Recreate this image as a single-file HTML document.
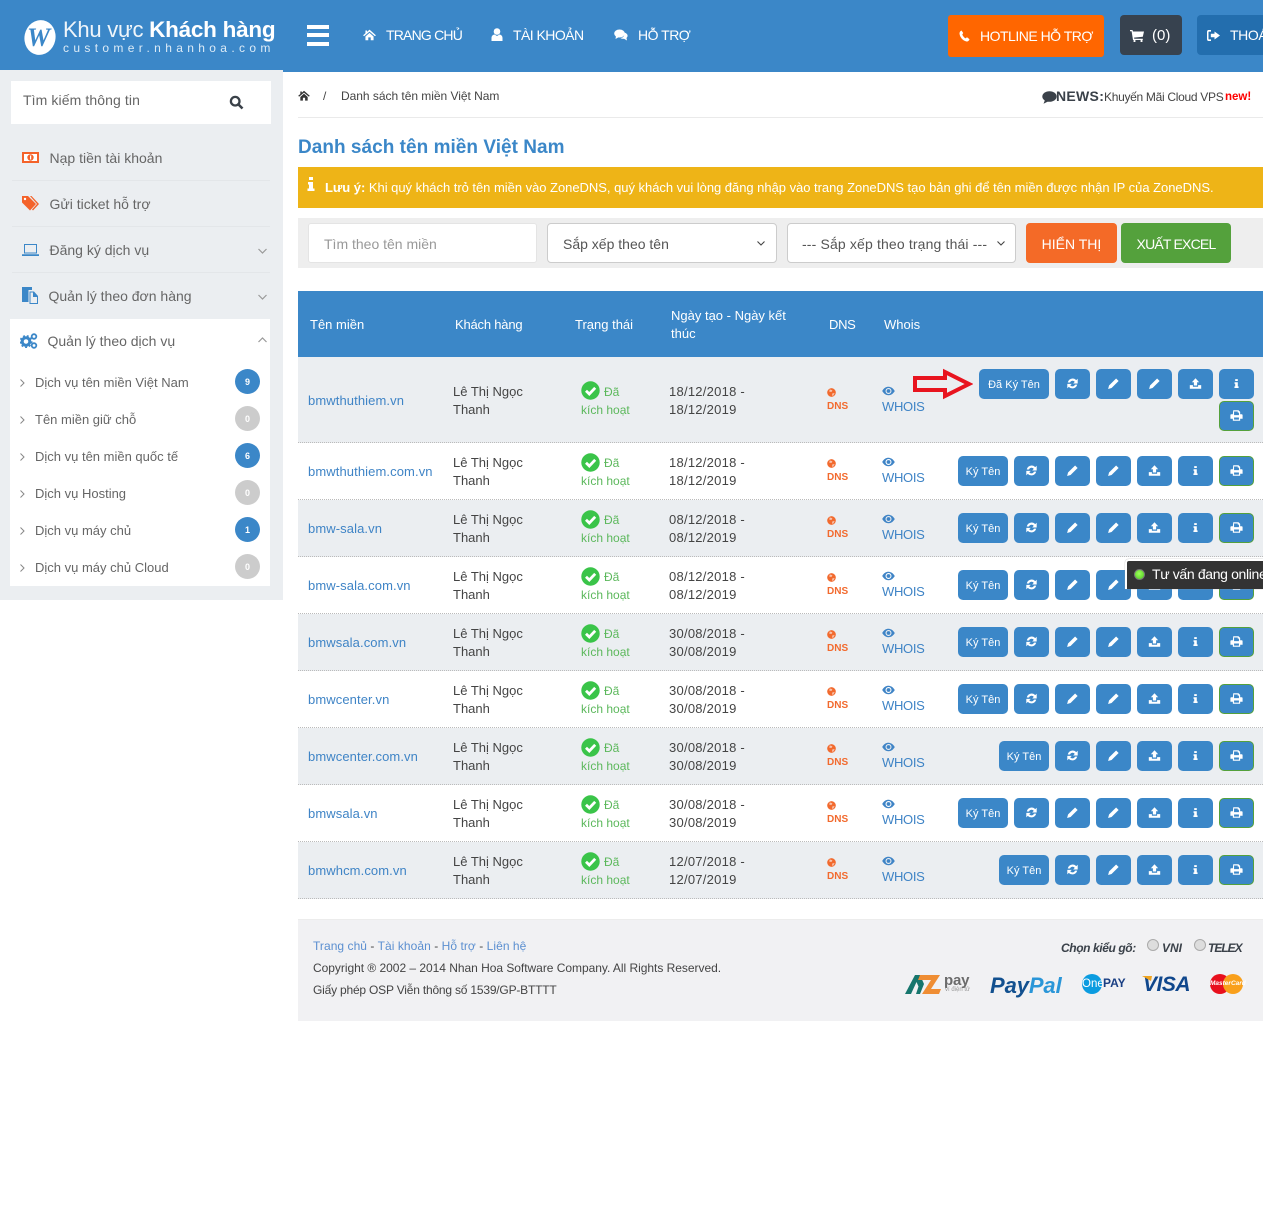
<!DOCTYPE html>
<html lang="vi"><head><meta charset="utf-8"><title>Danh sách tên miền Việt Nam</title>
<style>
*{box-sizing:border-box}
html,body{margin:0;padding:0;background:#fff}
body{width:1263px;height:1210px;position:relative;overflow:hidden;font-family:"Liberation Sans",sans-serif;font-size:13px;color:#444}
.a{position:absolute;white-space:nowrap}
svg{display:block}
.hd{position:absolute;left:0;top:0;width:1263px;height:72px;background:#3b87c8}
.nav{position:absolute;top:26px;color:#fff;font-size:14px;line-height:18px;white-space:nowrap}
.side{position:absolute;left:0;top:70px;width:283px;height:530px;background:#ebeef1}
.si{position:absolute;color:#666;font-size:14px;line-height:20px;white-space:nowrap}
.sep{position:absolute;left:12px;width:258px;height:1px;background:#e3e6e9}
.sub{position:absolute;left:35px;color:#666;font-size:13px;line-height:20px;white-space:nowrap}
.bdg{position:absolute;left:235px;width:25px;height:25px;border-radius:50%;color:#fff;font-size:9px;font-weight:bold;text-align:center;line-height:26px}
.bl{background:#3b87c8}.gr{background:#ccc}
.th{position:absolute;color:#fff;font-size:13px;line-height:18px;white-space:nowrap}
.r{position:absolute;left:298px;width:965px;height:57px;border-bottom:1px dotted #bbb}
.g{background:#ebeef1}
.in{position:absolute;left:0;top:0;width:965px;height:57px}
.d{position:absolute;left:10px;top:20px;color:#3f84c6;font-size:13px;line-height:18px;white-space:nowrap;letter-spacing:.1px}
.n{position:absolute;left:155px;top:11px;line-height:18px;white-space:nowrap;color:#444}
.ok{position:absolute;left:283px;top:10px;width:19px;height:19px}
.s1{position:absolute;left:306px;top:11px;color:#5cb85c;line-height:18px;font-size:12px}
.s2{position:absolute;left:283px;top:29px;color:#5cb85c;line-height:18px;white-space:nowrap;font-size:12px}
.dt{position:absolute;left:371px;top:11px;line-height:18px;white-space:nowrap;color:#444;letter-spacing:.25px}
.gl{position:absolute;left:529px;top:16px;width:9px;height:9px}
.dn{position:absolute;left:529px;top:29px;color:#f26a2e;font-size:10px;font-weight:bold;line-height:12px}
.ey{position:absolute;left:584px;top:14px;width:13px;height:10px}
.wh{position:absolute;left:584px;top:26px;color:#3f84c6;line-height:18px;letter-spacing:-.3px}
.b{position:absolute;top:13px;width:35px;height:30px;background:#3b87c8;border-radius:5px;color:#fff}
.b svg{position:absolute;left:11px;top:8px;width:13px;height:13px;fill:#fff}
.p{border:1px solid #54a13c}.p svg{left:10px;top:7px}
.t{position:absolute;top:13px;height:30px;background:#3b87c8;border-radius:5px;color:#fff;font-size:11px;text-align:center;line-height:33px;white-space:nowrap}
.x1{left:921px}.x2{left:880px}.x3{left:839px}.x4{left:798px}.x5{left:757px}.x6{left:716px}
.ky{left:660px;width:50px}.ky2{left:701px;width:50px}
.f{position:absolute;left:313px;font-size:12px;line-height:18px;white-space:nowrap;color:#444}
.f b{font-weight:normal;color:#5b8fd0}
</style></head>
<body>
<svg width="0" height="0" style="position:absolute">
<symbol id="ref" viewBox="0 0 16 16"><path d="M8 1.800a6.200 6.200 0 0 1 4.600 2.100L14.400 2.200V8H8.800L10.800 6A3.400 3.400 0 0 0 4.900 6.800H2.200A6.200 6.200 0 0 1 8 1.800zM1.600 8.400H7.200L5.200 10.200A3.400 3.400 0 0 0 11.100 9.400H13.800A6.200 6.200 0 0 1 3.400 12.200L1.600 14z"/></symbol>
<symbol id="pen" viewBox="0 0 16 16"><path d="M11.200 1.800L14.300 4.900 5.600 13.600 1.400 14.700 2.500 10.500z"/></symbol>
<symbol id="up" viewBox="0 0 16 16"><path d="M8 1.500L12.500 6.500H10V10.500H6V6.500H3.500zM1 10H4.800V12H11.200V10H15V14.500H1z"/></symbol>
<symbol id="inf" viewBox="-2 -2 20 20"><path d="M6 1.200H10V4.200H6zM5 6H10V12.500H11.200V15H4.800V12.500H6V8.500H5z"/></symbol>
<symbol id="pr" viewBox="0 0 16 16"><path fill-rule="evenodd" d="M4 1.500H10.500L12.500 3.500V6.500H14.500A1 1 0 0 1 15.500 7.500V12H12.500V14.500H3.500V12H.5V7.500A1 1 0 0 1 1.500 6.500H3.500zM5 3V7.500H11V4.500H9.500V3zM5 10.500V13H11V10.500z"/></symbol>
<symbol id="chk" viewBox="0 0 19 19"><circle cx="9.500" cy="9.500" r="9.200" fill="#3ac449"/><path d="M5 9.800L8.300 13 14.200 6.800" fill="none" stroke="#fff" stroke-width="2.800"/></symbol>
<symbol id="glo" viewBox="0 0 10 10"><circle cx="5" cy="5" r="4.800" fill="#f26a2e"/><path d="M3 1.500L6 2.500 5 4.500 2.500 4zM6 6L8.500 5.500 7 8.500 5.500 8.500z" fill="#f7c3ae"/></symbol>
<symbol id="eye" viewBox="0 0 13 10"><path fill="#3f84c6" fill-rule="evenodd" d="M.2 5C2 2 4 .8 6.500.8S11 2 12.800 5C11 8 9 9.200 6.500 9.200S2 8 .2 5zM6.500 2A3 3 0 1 0 6.500 8 3 3 0 0 0 6.500 2z"/><circle cx="6.500" cy="5" r="1.900" fill="#3f84c6"/></symbol>
</svg>

<div class="hd"></div>
<svg class="a" style="left:24px;top:19px" width="32" height="37" viewBox="0 0 32 37"><ellipse cx="16" cy="18.500" rx="15.500" ry="17.500" transform="rotate(12 16 18.500)" fill="#fff"/></svg>
<div class="a" style="left:27px;top:23px;font:italic bold 26px/30px 'Liberation Serif',serif;color:#3b87c8">W</div>
<div class="a" style="left:63px;top:17px;color:#fff;font-size:22px;line-height:26px;letter-spacing:-.25px"><span style="opacity:.92">Khu vực</span> <b style="font-size:22.500px">Khách hàng</b></div>
<div class="a" style="left:63px;top:41px;color:#dcebf7;font-size:12px;line-height:14px;letter-spacing:4.350px">customer.nhanhoa.com</div>
<div class="a" style="left:307px;top:25px;width:22px;height:21px;border-top:4px solid #fff;border-bottom:4px solid #fff"></div>
<div class="a" style="left:307px;top:33px;width:22px;height:4px;background:#fff"></div>
<svg class="a" style="left:363px;top:28px" width="13" height="13" viewBox="0 0 16 16"><path fill="#fff" d="M8 2L16 9 14.500 10 8 4.500 1.500 10 0 9 3 6.400V3H5V4.700zM3 10.500L8 6 13 10.500V15H9.500V11.500H6.500V15H3z"/></svg>
<div class="nav" style="left:386px;letter-spacing:-.8px">TRANG CHỦ</div>
<svg class="a" style="left:491px;top:28px" width="12" height="13" viewBox="0 0 12 13"><circle cx="6" cy="3.500" r="3.300" fill="#fff"/><path fill="#fff" d="M.5 13V10C.5 7.500 2.500 6.500 3.500 6.500L6 8 8.500 6.500C9.500 6.500 11.500 7.500 11.500 10V13z"/></svg>
<div class="nav" style="left:513px;letter-spacing:-.55px">TÀI KHOẢN</div>
<svg class="a" style="left:614px;top:29px" width="14" height="12" viewBox="0 0 14 12"><ellipse cx="5.500" cy="4.500" rx="5.300" ry="4" fill="#fff"/><path fill="#fff" d="M2 7L1.500 10 5 8zM10 3.500C12.500 4 14 5.500 13.500 7.500L12.500 9 13 11.500 10 9.800C8.500 10 7 9.500 6.500 9 9 9 11 7 10 3.500z"/></svg>
<div class="nav" style="left:638px;letter-spacing:-.5px">HỖ TRỢ</div>
<div class="a" style="left:948px;top:15px;width:156px;height:42px;background:#f60;border-radius:3px"></div>
<svg class="a" style="left:959px;top:30px" width="11" height="12" viewBox="0 0 11 12"><path fill="#fff" d="M2.500.5L4.200 3 3.300 4.500C3.800 6 5 7.500 6.500 8.400L8 7.300 10.500 9.300C10 11 8.700 11.800 7.500 11.500 3.500 10.500.8 7 .5 3.500.5 2 1.300 1 2.500.5z"/></svg>
<div class="nav" style="left:980px;top:27px;letter-spacing:-.5px">HOTLINE HỖ TRỢ</div>
<div class="a" style="left:1120px;top:15px;width:62px;height:40px;background:#37424f;border-radius:4px"></div>
<svg class="a" style="left:1130px;top:30px" width="14" height="12" viewBox="0 0 14 12"><path fill="#fff" d="M0 0H2.500L3 1.500H14L12.800 6.800 4 7.600 4.300 8.800H12.800V10H3L1.600 1.200H0z"/><circle cx="4.500" cy="11" r="1.100" fill="#fff"/><circle cx="11.500" cy="11" r="1.100" fill="#fff"/></svg>
<div class="nav" style="left:1152px;top:27px;font-size:15px">(0)</div>
<div class="a" style="left:1197px;top:15px;width:80px;height:40px;background:#236eae;border-radius:4px"></div>
<svg class="a" style="left:1207px;top:30px" width="13" height="11" viewBox="0 0 13 11"><path fill="#fff" d="M4 0V1.600H2C1.500 1.600 1.500 2 1.500 2.500V8.500C1.500 9 1.600 9.400 2 9.400H4V11H1.500C.5 11 0 10 0 9V2C0 1 .5 0 1.500 0zM7.500 1.500L13 5.500 7.500 9.500V7.200H3.800V3.800H7.500z"/></svg>
<div class="nav" style="left:1230px;top:26px;letter-spacing:-.4px">THOÁT</div>

<div class="side"></div>
<div class="a" style="left:11px;top:81px;width:260px;height:43px;background:#fff"></div>
<div class="si" style="left:23px;top:90px;letter-spacing:.1px">Tìm kiếm thông tin</div>
<svg class="a" style="left:229px;top:95px" width="15" height="15" viewBox="0 0 15 15"><circle cx="6.200" cy="6.200" r="4.300" fill="none" stroke="#3a4149" stroke-width="2.300"/><path d="M9.500 9.500L13.500 13.500" stroke="#3a4149" stroke-width="2.600"/></svg>

<svg class="a" style="left:22px;top:152px" width="17" height="11" viewBox="0 0 17 11"><rect width="17" height="11" fill="#f4622a"/><rect x="2" y="2" width="13" height="7" fill="#fff"/><circle cx="8.500" cy="5.500" r="3.200" fill="#f4622a"/><rect x="8" y="3.500" width="1.200" height="4" fill="#fff"/></svg>
<div class="si" style="left:49.500px;top:148px">Nạp tiền tài khoản</div>
<div class="sep" style="top:180px"></div>
<svg class="a" style="left:22px;top:196px" width="17" height="15" viewBox="0 0 17 15"><path fill="#f4622a" d="M0 0H6L14 8 8 14.500 0 6.500z"/><path fill="#f4622a" d="M8 0H9.500L17 8 11 14.500 10 13.500 15 8z"/><circle cx="3" cy="3" r="1.200" fill="#fff"/></svg>
<div class="si" style="left:49.500px;top:194px">Gửi ticket hỗ trợ</div>
<div class="sep" style="top:226px"></div>
<svg class="a" style="left:22px;top:244px" width="17" height="12" viewBox="0 0 17 12"><path fill="#3b87c8" fill-rule="evenodd" d="M2 0H15V9.500H2zM3 1V8.500H14V1zM0 10.300H17V12H0z"/></svg>
<div class="si" style="left:49.500px;top:240px">Đăng ký dịch vụ</div>
<svg class="a" style="left:258px;top:248px" width="9" height="6"><path d="M.5 1L4.500 5 8.500 1" fill="none" stroke="#999" stroke-width="1.200"/></svg>
<div class="sep" style="top:272px"></div>
<svg class="a" style="left:22px;top:287px" width="16" height="17" viewBox="0 0 16 17"><path fill="#3b87c8" d="M0 0H10V3H6.500V15H0z"/><path fill="#3b87c8" fill-rule="evenodd" d="M7.500 4.500H12L16 9V17H7.500zM8.500 5.500V16H15V10H11V5.500z"/></svg>
<div class="si" style="left:48.500px;top:286px">Quản lý theo đơn hàng</div>
<svg class="a" style="left:258px;top:294px" width="9" height="6"><path d="M.5 1L4.500 5 8.500 1" fill="none" stroke="#999" stroke-width="1.200"/></svg>

<div class="a" style="left:10px;top:319px;width:260px;height:267px;background:#fff"></div>
<svg class="a" style="left:20px;top:333px" width="18" height="16" viewBox="0 0 18 16"><circle cx="6" cy="8.500" r="3.800" fill="none" stroke="#3b87c8" stroke-width="3"/><circle cx="6" cy="8.500" r="5.800" fill="none" stroke="#3b87c8" stroke-width="1.400" stroke-dasharray="2 2"/><circle cx="14" cy="3.500" r="2.300" fill="none" stroke="#3b87c8" stroke-width="1.800"/><circle cx="14" cy="12.500" r="2.300" fill="none" stroke="#3b87c8" stroke-width="1.800"/></svg>
<div class="si" style="left:47.500px;top:331px">Quản lý theo dịch vụ</div>
<svg class="a" style="left:258px;top:337px" width="9" height="6"><path d="M.5 5L4.500 1 8.500 5" fill="none" stroke="#999" stroke-width="1.200"/></svg>

<svg class="a" style="left:20px;top:379px" width="5" height="8"><path d="M.5.5L4 4 .5 7.500" fill="none" stroke="#888"/></svg><div class="sub" style="top:373px">Dịch vụ tên miền Việt Nam</div><div class="bdg bl" style="top:369px">9</div>
<svg class="a" style="left:20px;top:416px" width="5" height="8"><path d="M.5.5L4 4 .5 7.500" fill="none" stroke="#888"/></svg><div class="sub" style="top:410px">Tên miền giữ chỗ</div><div class="bdg gr" style="top:406px">0</div>
<svg class="a" style="left:20px;top:453px" width="5" height="8"><path d="M.5.5L4 4 .5 7.500" fill="none" stroke="#888"/></svg><div class="sub" style="top:447px">Dịch vụ tên miền quốc tế</div><div class="bdg bl" style="top:443px">6</div>
<svg class="a" style="left:20px;top:490px" width="5" height="8"><path d="M.5.5L4 4 .5 7.500" fill="none" stroke="#888"/></svg><div class="sub" style="top:484px">Dịch vụ Hosting</div><div class="bdg gr" style="top:480px">0</div>
<svg class="a" style="left:20px;top:527px" width="5" height="8"><path d="M.5.5L4 4 .5 7.500" fill="none" stroke="#888"/></svg><div class="sub" style="top:521px">Dịch vụ máy chủ</div><div class="bdg bl" style="top:517px">1</div>
<svg class="a" style="left:20px;top:564px" width="5" height="8"><path d="M.5.5L4 4 .5 7.500" fill="none" stroke="#888"/></svg><div class="sub" style="top:558px">Dịch vụ máy chủ Cloud</div><div class="bdg gr" style="top:554px">0</div>

<svg class="a" style="left:298px;top:90px" width="12" height="11" viewBox="0 0 16 15"><path fill="#333" d="M8 1L16 8 14.500 9 8 3.500 1.500 9 0 8 3 5.400V2H5V3.700zM3 9.500L8 5 13 9.500V14.500H9.500V10.500H6.500V14.500H3z"/></svg>
<div class="a" style="left:323px;top:87px;font-size:12px;line-height:18px">/</div>
<div class="a" style="left:341px;top:87px;font-size:12px;line-height:18px;color:#444;letter-spacing:-.03px">Danh sách tên miền Việt Nam</div>
<div class="a" style="left:298px;top:117px;width:965px;height:1px;background:#eaeaea"></div>
<svg class="a" style="left:1042px;top:91px" width="15" height="13" viewBox="0 0 15 13"><ellipse cx="7.500" cy="5.500" rx="7.200" ry="5.300" fill="#3a4149"/><path d="M3 9L1.500 12.800 7 10z" fill="#3a4149"/></svg>
<div class="a" style="left:1056px;top:87px;font-size:14px;font-weight:bold;line-height:18px;color:#3a4149;letter-spacing:.3px">NEWS:</div>
<div class="a" style="left:1104px;top:88px;font-size:12px;line-height:18px;color:#444;letter-spacing:-.3px">Khuyến Mãi Cloud VPS</div>
<div class="a" style="left:1225px;top:89px;font-size:11.500px;font-weight:bold;line-height:16px;color:#f00">new!</div>

<div class="a" style="left:298px;top:135px;font-size:19px;font-weight:bold;line-height:26px;color:#3b87c8;letter-spacing:.03px">Danh sách tên miền Việt Nam</div>
<div class="a" style="left:298px;top:167px;width:965px;height:41px;background:#eeb417"></div>
<svg class="a" style="left:307px;top:177px" width="8" height="14" viewBox="0 0 8 14"><path fill="#fff" d="M2 0H6V3H2zM1 5H6V11.500H7.500V14H.5V11.500H2V7.500H1z"/></svg>
<div class="a" style="left:325px;top:179px;color:#fff;font-size:13px;line-height:17px;letter-spacing:-.03px"><b>Lưu ý:</b> Khi quý khách trỏ tên miền vào ZoneDNS, quý khách vui lòng đăng nhập vào trang ZoneDNS tạo bản ghi để tên miền được nhận IP của ZoneDNS.</div>

<div class="a" style="left:298px;top:218px;width:965px;height:50px;background:#eee"></div>
<div class="a" style="left:308px;top:223px;width:229px;height:40px;background:#fff;border:1px solid #e4e4e4;border-radius:3px;color:#999;font-size:14px;line-height:41px;padding-left:15px">Tìm theo tên miền</div>
<div class="a" style="left:547px;top:223px;width:230px;height:40px;background:#fff;border:1px solid #ccc;border-radius:4px;color:#555;font-size:14px;line-height:41px;padding-left:15px">Sắp xếp theo tên</div>
<svg class="a" style="left:757px;top:241px" width="8" height="5"><path d="M.5.5L4 4 7.500.5" fill="none" stroke="#444" stroke-width="1.100"/></svg>
<div class="a" style="left:787px;top:223px;width:229px;height:40px;background:#fff;border:1px solid #ccc;border-radius:4px;color:#555;font-size:14px;line-height:41px;padding-left:14px;letter-spacing:.15px">--- Sắp xếp theo trạng thái ---</div>
<svg class="a" style="left:997px;top:241px" width="8" height="5"><path d="M.5.5L4 4 7.500.5" fill="none" stroke="#444" stroke-width="1.100"/></svg>
<div class="a" style="left:1026px;top:223px;width:91px;height:40px;background:#f46a27;border-radius:4px;color:#fff;font-size:14px;line-height:42px;text-align:center">HIỂN THỊ</div>
<div class="a" style="left:1121px;top:223px;width:110px;height:40px;background:#54a13c;border-radius:4px;color:#fff;font-size:14px;line-height:42px;text-align:center;letter-spacing:-.8px">XUẤT EXCEL</div>

<div class="a" style="left:298px;top:291px;width:965px;height:66px;background:#3b87c8"></div>
<div class="th" style="left:310px;top:316px">Tên miền</div>
<div class="th" style="left:455px;top:316px;letter-spacing:-.2px">Khách hàng</div>
<div class="th" style="left:575px;top:316px">Trạng thái</div>
<div class="th" style="left:671px;top:307px">Ngày tạo - Ngày kết<br>thúc</div>
<div class="th" style="left:829px;top:316px;letter-spacing:-.3px">DNS</div>
<div class="th" style="left:884px;top:316px">Whois</div>

<div class="r g" style="top:357px;height:86px"><div class="in" style="top:15px">
<div class="d">bmwthuthiem.vn</div><div class="n">Lê Thị Ngọc<br>Thanh</div><svg class="ok" style="top:9px"><use href="#chk"/></svg><div class="s1">Đã</div><div class="s2">kích hoạt</div><div class="dt">18/12/2018 -<br>18/12/2019</div><svg class="gl"><use href="#glo"/></svg><div class="dn">DNS</div><svg class="ey"><use href="#eye"/></svg><div class="wh">WHOIS</div></div>
<svg class="a" style="left:615px;top:11px" width="60" height="32" viewBox="0 0 60 32"><path d="M2 10H32V4L56 16 32 28V22H2z" fill="none" stroke="#e8141f" stroke-width="4"/></svg>
<div class="t" style="left:681px;top:12px;width:70px">Đã Ký Tên</div>
<div class="b x5" style="top:12px"><svg><use href="#ref"/></svg></div><div class="b x4" style="top:12px"><svg><use href="#pen"/></svg></div><div class="b x3" style="top:12px"><svg><use href="#pen"/></svg></div><div class="b x2" style="top:12px"><svg><use href="#up"/></svg></div><div class="b x1" style="top:12px"><svg><use href="#inf"/></svg></div><div class="b x1 p" style="top:44px"><svg><use href="#pr"/></svg></div>
</div>

<div class="r" style="top:443px"><div class="d">bmwthuthiem.com.vn</div><div class="n">Lê Thị Ngọc<br>Thanh</div><svg class="ok"><use href="#chk"/></svg><div class="s1">Đã</div><div class="s2">kích hoạt</div><div class="dt">18/12/2018 -<br>18/12/2019</div><svg class="gl"><use href="#glo"/></svg><div class="dn">DNS</div><svg class="ey"><use href="#eye"/></svg><div class="wh">WHOIS</div>
<div class="t ky">Ký Tên</div><div class="b x6"><svg><use href="#ref"/></svg></div><div class="b x5"><svg><use href="#pen"/></svg></div><div class="b x4"><svg><use href="#pen"/></svg></div><div class="b x3"><svg><use href="#up"/></svg></div><div class="b x2"><svg><use href="#inf"/></svg></div><div class="b x1 p"><svg><use href="#pr"/></svg></div></div>

<div class="r g" style="top:500px"><div class="d">bmw-sala.vn</div><div class="n">Lê Thị Ngọc<br>Thanh</div><svg class="ok"><use href="#chk"/></svg><div class="s1">Đã</div><div class="s2">kích hoạt</div><div class="dt">08/12/2018 -<br>08/12/2019</div><svg class="gl"><use href="#glo"/></svg><div class="dn">DNS</div><svg class="ey"><use href="#eye"/></svg><div class="wh">WHOIS</div>
<div class="t ky">Ký Tên</div><div class="b x6"><svg><use href="#ref"/></svg></div><div class="b x5"><svg><use href="#pen"/></svg></div><div class="b x4"><svg><use href="#pen"/></svg></div><div class="b x3"><svg><use href="#up"/></svg></div><div class="b x2"><svg><use href="#inf"/></svg></div><div class="b x1 p"><svg><use href="#pr"/></svg></div></div>

<div class="r" style="top:557px"><div class="d">bmw-sala.com.vn</div><div class="n">Lê Thị Ngọc<br>Thanh</div><svg class="ok"><use href="#chk"/></svg><div class="s1">Đã</div><div class="s2">kích hoạt</div><div class="dt">08/12/2018 -<br>08/12/2019</div><svg class="gl"><use href="#glo"/></svg><div class="dn">DNS</div><svg class="ey"><use href="#eye"/></svg><div class="wh">WHOIS</div>
<div class="t ky">Ký Tên</div><div class="b x6"><svg><use href="#ref"/></svg></div><div class="b x5"><svg><use href="#pen"/></svg></div><div class="b x4"><svg><use href="#pen"/></svg></div><div class="b x3"><svg><use href="#up"/></svg></div><div class="b x2"><svg><use href="#inf"/></svg></div><div class="b x1 p"><svg><use href="#pr"/></svg></div></div>

<div class="r g" style="top:614px"><div class="d">bmwsala.com.vn</div><div class="n">Lê Thị Ngọc<br>Thanh</div><svg class="ok"><use href="#chk"/></svg><div class="s1">Đã</div><div class="s2">kích hoạt</div><div class="dt">30/08/2018 -<br>30/08/2019</div><svg class="gl"><use href="#glo"/></svg><div class="dn">DNS</div><svg class="ey"><use href="#eye"/></svg><div class="wh">WHOIS</div>
<div class="t ky">Ký Tên</div><div class="b x6"><svg><use href="#ref"/></svg></div><div class="b x5"><svg><use href="#pen"/></svg></div><div class="b x4"><svg><use href="#pen"/></svg></div><div class="b x3"><svg><use href="#up"/></svg></div><div class="b x2"><svg><use href="#inf"/></svg></div><div class="b x1 p"><svg><use href="#pr"/></svg></div></div>

<div class="r" style="top:671px"><div class="d">bmwcenter.vn</div><div class="n">Lê Thị Ngọc<br>Thanh</div><svg class="ok"><use href="#chk"/></svg><div class="s1">Đã</div><div class="s2">kích hoạt</div><div class="dt">30/08/2018 -<br>30/08/2019</div><svg class="gl"><use href="#glo"/></svg><div class="dn">DNS</div><svg class="ey"><use href="#eye"/></svg><div class="wh">WHOIS</div>
<div class="t ky">Ký Tên</div><div class="b x6"><svg><use href="#ref"/></svg></div><div class="b x5"><svg><use href="#pen"/></svg></div><div class="b x4"><svg><use href="#pen"/></svg></div><div class="b x3"><svg><use href="#up"/></svg></div><div class="b x2"><svg><use href="#inf"/></svg></div><div class="b x1 p"><svg><use href="#pr"/></svg></div></div>

<div class="r g" style="top:728px"><div class="d">bmwcenter.com.vn</div><div class="n">Lê Thị Ngọc<br>Thanh</div><svg class="ok"><use href="#chk"/></svg><div class="s1">Đã</div><div class="s2">kích hoạt</div><div class="dt">30/08/2018 -<br>30/08/2019</div><svg class="gl"><use href="#glo"/></svg><div class="dn">DNS</div><svg class="ey"><use href="#eye"/></svg><div class="wh">WHOIS</div>
<div class="t ky2">Ký Tên</div><div class="b x5"><svg><use href="#ref"/></svg></div><div class="b x4"><svg><use href="#pen"/></svg></div><div class="b x3"><svg><use href="#up"/></svg></div><div class="b x2"><svg><use href="#inf"/></svg></div><div class="b x1 p"><svg><use href="#pr"/></svg></div></div>

<div class="r" style="top:785px"><div class="d">bmwsala.vn</div><div class="n">Lê Thị Ngọc<br>Thanh</div><svg class="ok"><use href="#chk"/></svg><div class="s1">Đã</div><div class="s2">kích hoạt</div><div class="dt">30/08/2018 -<br>30/08/2019</div><svg class="gl"><use href="#glo"/></svg><div class="dn">DNS</div><svg class="ey"><use href="#eye"/></svg><div class="wh">WHOIS</div>
<div class="t ky">Ký Tên</div><div class="b x6"><svg><use href="#ref"/></svg></div><div class="b x5"><svg><use href="#pen"/></svg></div><div class="b x4"><svg><use href="#pen"/></svg></div><div class="b x3"><svg><use href="#up"/></svg></div><div class="b x2"><svg><use href="#inf"/></svg></div><div class="b x1 p"><svg><use href="#pr"/></svg></div></div>

<div class="r g" style="top:842px"><div class="d">bmwhcm.com.vn</div><div class="n">Lê Thị Ngọc<br>Thanh</div><svg class="ok"><use href="#chk"/></svg><div class="s1">Đã</div><div class="s2">kích hoạt</div><div class="dt">12/07/2018 -<br>12/07/2019</div><svg class="gl"><use href="#glo"/></svg><div class="dn">DNS</div><svg class="ey"><use href="#eye"/></svg><div class="wh">WHOIS</div>
<div class="t ky2">Ký Tên</div><div class="b x5"><svg><use href="#ref"/></svg></div><div class="b x4"><svg><use href="#pen"/></svg></div><div class="b x3"><svg><use href="#up"/></svg></div><div class="b x2"><svg><use href="#inf"/></svg></div><div class="b x1 p"><svg><use href="#pr"/></svg></div></div>

<div class="a" style="left:1125px;top:559px;width:138px;height:30px;background:#333;border:2px solid #fff;border-right:0;border-bottom:0;border-radius:4px 0 0 0;box-shadow:0 0 1px #999"></div>
<div class="a" style="left:1134px;top:569px;width:11px;height:11px;border-radius:50%;background:radial-gradient(circle at 45% 40%,#9dff5a,#49c81e);border:1px solid #777"></div>
<div class="a" style="left:1152px;top:565px;color:#fff;font-size:14px;line-height:18px;width:111px;overflow:hidden;letter-spacing:-.35px">Tư vấn đang online</div>

<div class="a" style="left:298px;top:919px;width:965px;height:102px;background:#f1f1f3;border-top:1px solid #ececec"></div>
<div class="f" style="top:937px;letter-spacing:.05px"><b>Trang chủ</b> - <b>Tài khoản</b> - <b>Hỗ trợ</b> - <b>Liên hệ</b></div>
<div class="f" style="top:959px;letter-spacing:-.03px">Copyright ® 2002 – 2014 Nhan Hoa Software Company. All Rights Reserved.</div>
<div class="f" style="top:981px;letter-spacing:-.2px">Giấy phép OSP Viễn thông số 1539/GP-BTTTT</div>
<div class="a" style="left:1061px;top:940px;font-size:12px;font-style:italic;font-weight:bold;line-height:17px;color:#3a4149;letter-spacing:-.4px">Chọn kiểu gõ:</div>
<div class="a" style="left:1147px;top:939px;width:12px;height:12px;border-radius:50%;background:#ddd;border:1px solid #aaa"></div>
<div class="a" style="left:1162px;top:940px;font-size:12px;font-style:italic;font-weight:bold;line-height:17px;color:#3a4149">VNI</div>
<div class="a" style="left:1194px;top:939px;width:12px;height:12px;border-radius:50%;background:#ddd;border:1px solid #aaa"></div>
<div class="a" style="left:1208px;top:940px;font-size:12px;font-style:italic;font-weight:bold;line-height:17px;color:#3a4149;letter-spacing:-1px">TELEX</div>
<svg class="a" style="left:905px;top:974px" width="36" height="21" viewBox="0 0 36 21"><path d="M0 20L10 1H15L19 10 15 20H11L13.500 12.500 11.500 8 6 20z" fill="#17766d"/><path d="M15 1H35L26 15H36L34 20H17L26 6H13z" fill="#ef8d33"/></svg>
<div class="a" style="left:944px;top:972px;font-size:15px;font-weight:bold;line-height:17px;letter-spacing:-.2px;color:#6b6b6b">pay</div>
<div class="a" style="left:945px;top:986px;font-size:6px;line-height:8px;color:#999">ví điện tử</div>
<div class="a" style="left:990px;top:973px;font-size:22px;font-style:italic;font-weight:bold;line-height:26px;color:#12508f;letter-spacing:-.1px">Pay<span style="color:#2a96d8">Pal</span></div>
<div class="a" style="left:1082px;top:974px;width:20px;height:20px;border-radius:50%;background:#0b9ce0"></div>
<div class="a" style="left:1082px;top:977px;font-size:11.500px;line-height:14px;color:#fff">One</div>
<div class="a" style="left:1103px;top:977px;font-size:12px;font-weight:bold;line-height:13px;color:#1a3f83">PAY</div>
<div class="a" style="left:1143px;top:973px;font-size:21px;font-style:italic;font-weight:bold;line-height:24px;color:#10478c;letter-spacing:-.5px">VISA</div>
<svg class="a" style="left:1142px;top:976px" width="10" height="6"><path d="M0 0H10L9 5z" fill="#f0a41f"/></svg>
<div class="a" style="left:1210px;top:974px;width:20px;height:20px;border-radius:50%;background:#e8101d"></div>
<div class="a" style="left:1223px;top:974px;width:20px;height:20px;border-radius:50%;background:#f9a01b"></div>
<div class="a" style="left:1210px;top:979px;font-size:6.500px;font-style:italic;font-weight:bold;line-height:10px;color:#fff">MasterCard</div>
</body></html>
